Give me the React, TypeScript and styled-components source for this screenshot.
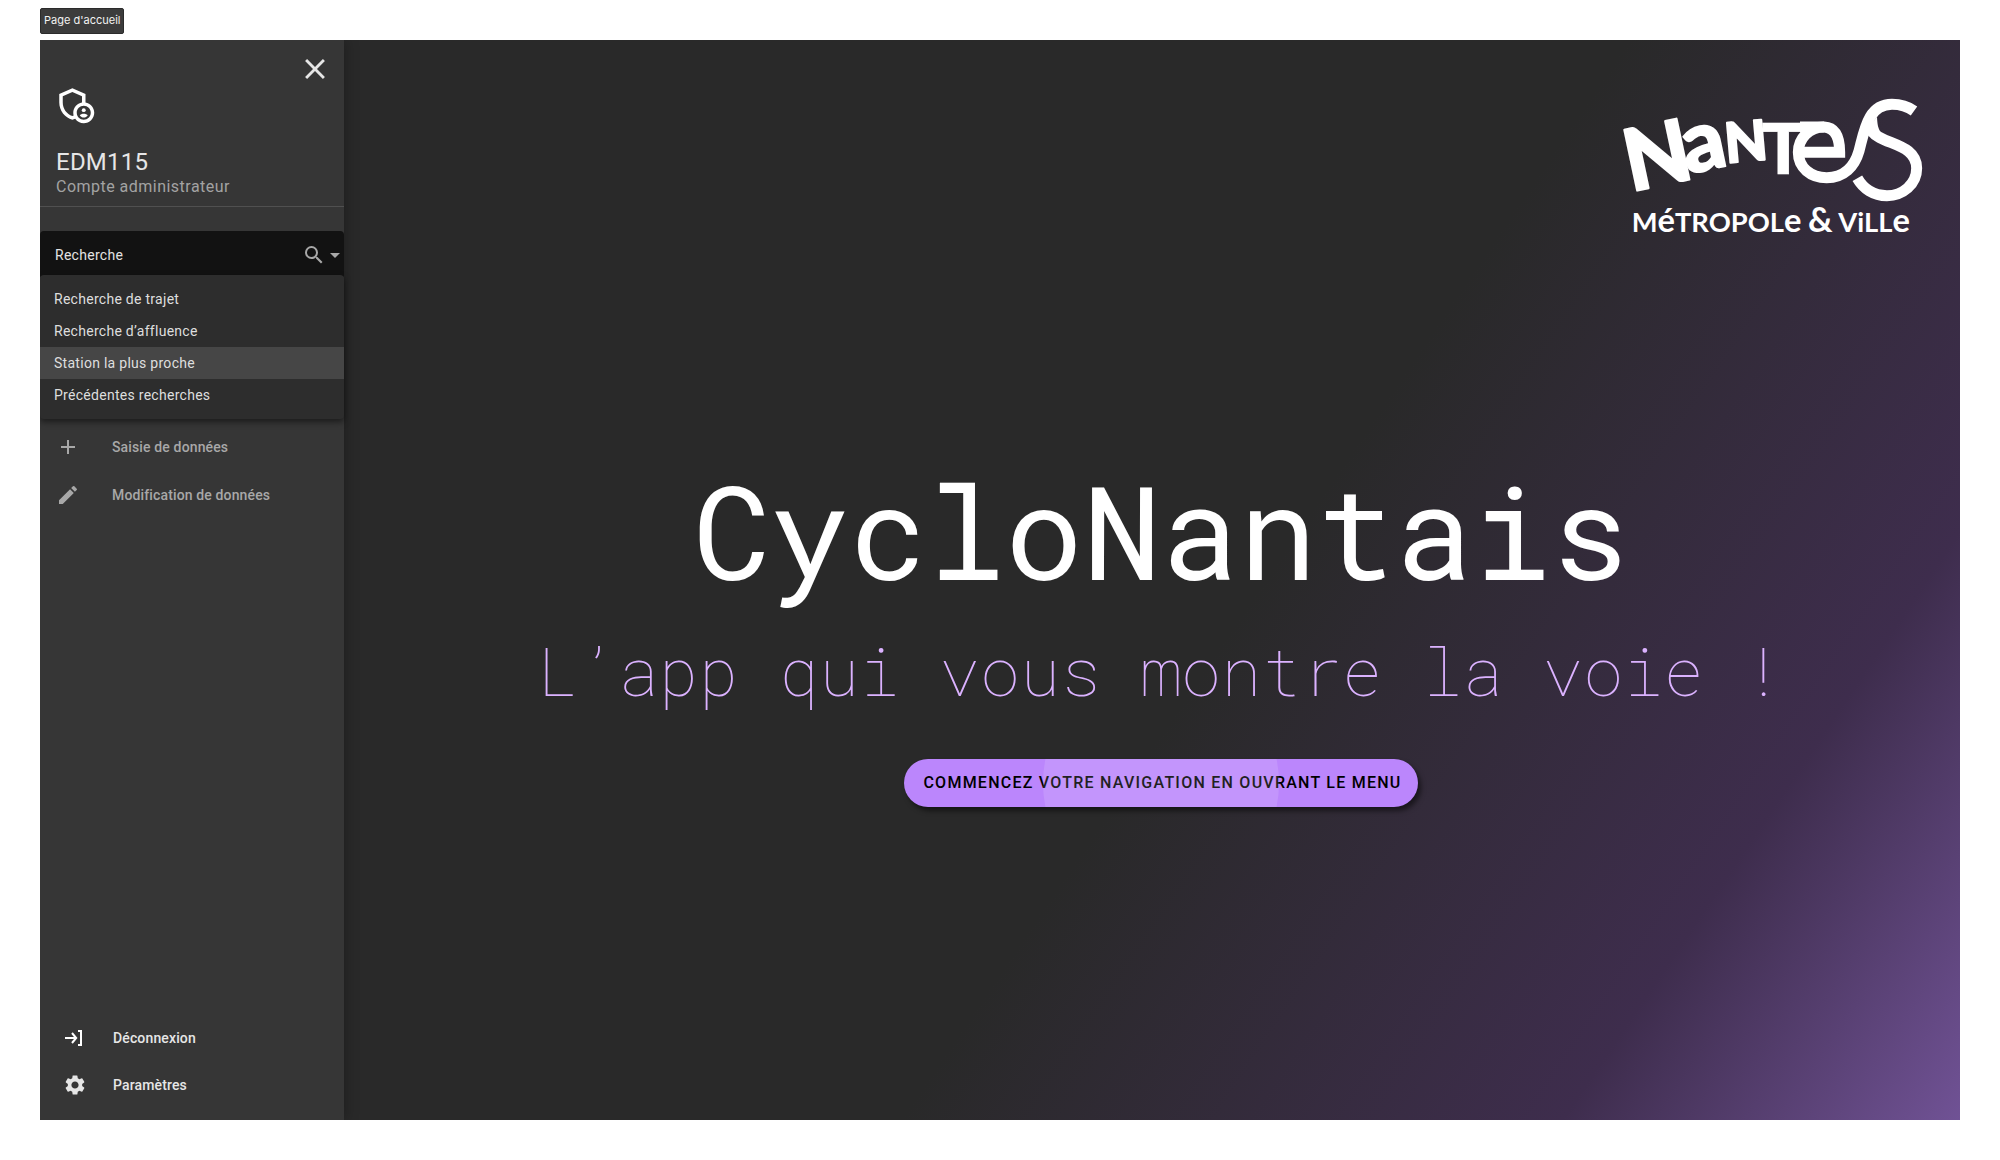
import React, { useState } from "react";
import styled, { createGlobalStyle } from "styled-components";
import {
  MdAdd,
  MdClose,
  MdEdit,
  MdOutlineAdminPanelSettings,
  MdSearch,
  MdSettings,
} from "react-icons/md";

const GlobalStyle = createGlobalStyle`
  *, *::before, *::after { box-sizing: border-box; }
  body {
    margin: 0;
    background: #ffffff;
    font-family: Roboto, "Liberation Sans", sans-serif;
  }
  button, input { font-family: inherit; }
`;

const Page = styled.div`
  display: flex;
  flex-direction: column;
  align-items: stretch;
  gap: 6px;
  min-height: 100vh;
  padding: 8px 40px 40px;
`;

const PageLabel = styled.div`
  align-self: flex-start;
  padding: 0 3px 1px;
  border: 1px solid #2b2b2b;
  border-radius: 2px;
  background: #3c3c3c;
  color: #f2f2f2;
  font: 400 11px/23px Inter, sans-serif;
`;

const Frame = styled.div`
  display: flex;
  flex: 1;
  overflow: hidden;
  background: linear-gradient(124deg, #292929 60%, #3e2d4d 85%, #705295 100%);
`;

const Sidebar = styled.aside`
  display: flex;
  flex-direction: column;
  flex: 0 0 304px;
  padding-bottom: 12px;
  background: #363636;
  box-shadow: 2px 0 12px rgba(0, 0, 0, 0.25);
`;

const Account = styled.header`
  padding: 12px 12px 9px 14px;
  border-bottom: 1px solid #505050;
`;

const AccountTop = styled.div`
  display: flex;
  align-items: flex-start;
  justify-content: space-between;
  margin-bottom: 23px;
  color: #ffffff;
`;

const Avatar = styled.span`
  display: flex;
  padding-top: 31px;
`;

const CloseButton = styled.button`
  display: flex;
  padding: 0;
  border: 0;
  background: none;
  color: #e6e6e6;
  cursor: pointer;
`;

const AccountName = styled.h2`
  margin: 0;
  padding-left: 2px;
  color: #e6e6e6;
  font-size: 24px;
  font-weight: 400;
  line-height: 28px;
  letter-spacing: 0.01em;
`;

const AccountRole = styled.p`
  margin: 1px 0 0;
  padding-left: 2px;
  color: #a3a3a3;
  font-size: 16px;
  line-height: 20px;
  letter-spacing: 0.03em;
`;

const SearchBar = styled.label`
  display: flex;
  align-items: center;
  height: 48px;
  margin: 24px 0 -4px;
  padding: 0 4px 0 15px;
  border-radius: 4px;
  background: #121212;
  color: #a8a8a8;
`;

const SearchInput = styled.input`
  flex: 1;
  min-width: 0;
  padding: 0;
  border: 0;
  outline: 0;
  background: none;
  color: #e3e3e3;
  font-size: 14px;
  line-height: 20px;
  letter-spacing: 0.02em;
`;

const CaretButton = styled.button`
  display: flex;
  padding: 4px 0 4px 4px;
  border: 0;
  background: none;
  color: inherit;
  cursor: pointer;
`;

const Menu = styled.ul`
  margin: 0 0 4px;
  padding: 8px 0;
  border-radius: 4px;
  background: #2d2d2d;
  box-shadow: 0 3px 6px rgba(0, 0, 0, 0.5);
  list-style: none;
`;

const MenuItem = styled.button<{ $active: boolean }>`
  display: block;
  width: 100%;
  padding: 0 14px;
  border: 0;
  background: ${(p) => (p.$active ? "#464646" : "transparent")};
  color: #dedede;
  font-size: 14px;
  line-height: 32px;
  letter-spacing: 0.02em;
  text-align: left;
  cursor: pointer;
`;

const Nav = styled.nav<{ $bright?: boolean }>`
  display: flex;
  flex-direction: column;
  margin-top: ${(p) => (p.$bright ? "auto" : "0")};
  color: ${(p) => (p.$bright ? "#e6e6e6" : "#a8a8a8")};
  padding-left: ${(p) => (p.$bright ? "23px" : "16px")};
  --icon-gap: ${(p) => (p.$bright ? "26px" : "32px")};
  --row-height: ${(p) => (p.$bright ? "47px" : "48px")};
`;

const NavLink = styled.a`
  display: flex;
  align-items: center;
  gap: var(--icon-gap);
  height: var(--row-height);
  color: inherit;
  font-size: 14px;
  font-weight: 500;
  letter-spacing: 0.01em;
  text-decoration: none;
`;

const Main = styled.main`
  display: flex;
  flex: 1;
  flex-direction: column;
  min-width: 0;
  padding: 58px 38px 58px 56px;
`;

const Logo = styled.svg`
  align-self: flex-end;
  width: 300px;
  height: 135px;
  fill: #ffffff;
  overflow: visible;
  font-family: Lato, sans-serif;
  font-weight: 900;
`;

const Hero = styled.section`
  display: flex;
  flex-direction: column;
  align-items: center;
  margin-top: 227px;
  text-align: center;
`;

const Title = styled.h1`
  margin: 0 0 30px;
  color: #ffffff;
  font: 400 130px/140px "Roboto Mono", "Liberation Mono", monospace;
`;

const Tagline = styled.p`
  margin: 0 0 49px;
  color: #dbb2ff;
  font: 100 67px/80px "Roboto Mono", "Liberation Mono", monospace;
  white-space: nowrap;
`;

const StartButton = styled.button`
  position: relative;
  overflow: hidden;
  height: 48px;
  padding: 0 16px 1px 19px;
  border: 0;
  border-radius: 24px;
  background: #bb86fc;
  color: #000000;
  font-size: 16px;
  font-weight: 500;
  letter-spacing: 0.078em;
  text-transform: uppercase;
  box-shadow: 3px 4px 5px rgba(0, 0, 0, 0.5);
  cursor: pointer;

  &::after {
    content: "";
    position: absolute;
    top: 50%;
    left: 50%;
    width: 236px;
    height: 236px;
    border-radius: 50%;
    background: rgba(255, 255, 255, 0.13);
    transform: translate(-50%, -50%);
  }
`;

const searches = [
  "Recherche de trajet",
  "Recherche d’affluence",
  "Station la plus proche",
  "Précédentes recherches",
];

function LogoutIcon() {
  return (
    <svg width="24" height="24" viewBox="0 0 24 24" fill="none" stroke="#ffffff" strokeWidth="2" aria-hidden="true">
      <path d="M2 12h10M9 7l4.200 5-4.200 5M15 5h3v14h-3" />
    </svg>
  );
}

function NantesLogo() {
  return (
    <Logo viewBox="66 53 900 405" role="img" aria-label="Nantes Métropole & Ville">
      <g stroke="#ffffff" strokeLinejoin="round">
        <text fontSize="256" strokeWidth="7" transform="translate(93 334) rotate(-12)">N</text>
        <text fontSize="254" strokeWidth="5" transform="translate(262 282) rotate(-12)">a</text>
        <text fontSize="166" strokeWidth="6" transform="translate(379 248) rotate(-5)">N</text>
      </g>
      <g fill="none" stroke="#ffffff" strokeWidth="33">
        <text fontSize="214" x="485" y="281" fill="#ffffff" strokeWidth="2">T</text>
        <path d="M600 140H672C707 142 719 172 719 216H606" />
        <path d="M672 140C628 140 595 174 595 216C595 262 632 292 680 292C732 292 764 258 777 212C793 152 803 72 876 72C906 72 924 79 942 92" />
        <path d="M814 152C846 194 950 188 950 264C950 312 908 346 861 346C820 346 789 324 772 294" />
      </g>
      <path d="M831 110C812 130 806 145 803 160L820 176L842 156C833 142 832 128 831 110Z" />
      <text x="95" y="455" fontSize="82" fontWeight="700">
        M<tspan fontSize="98">é</tspan>TROPOL<tspan fontSize="98">e</tspan> <tspan fontSize="102">&amp;</tspan> ViLL<tspan fontSize="98">e</tspan>
      </text>
    </Logo>
  );
}

export default function App() {
  const [query, setQuery] = useState("Recherche");
  const [active, setActive] = useState(2);

  return (
    <>
      <GlobalStyle />
      <Page>
        <PageLabel>Page d'accueil</PageLabel>
        <Frame>
          <Sidebar>
            <Account>
              <AccountTop>
                <Avatar>
                  <MdOutlineAdminPanelSettings size={42} />
                </Avatar>
                <CloseButton aria-label="Fermer le menu">
                  <MdClose size={34} />
                </CloseButton>
              </AccountTop>
              <AccountName>EDM115</AccountName>
              <AccountRole>Compte administrateur</AccountRole>
            </Account>

            <SearchBar>
              <SearchInput
                type="text"
                aria-label="Recherche"
                value={query}
                onChange={(e) => setQuery(e.target.value)}
              />
              <MdSearch size={24} />
              <CaretButton aria-label="Choisir un type de recherche" aria-expanded="true">
                <svg width="10" height="5" viewBox="0 0 10 5" fill="currentColor" aria-hidden="true">
                  <path d="M0 0h10L5 5z" />
                </svg>
              </CaretButton>
            </SearchBar>
            <Menu>
              {searches.map((label, i) => (
                <li key={label}>
                  <MenuItem $active={i === active} onClick={() => setActive(i)}>
                    {label}
                  </MenuItem>
                </li>
              ))}
            </Menu>

            <Nav aria-label="Données">
              <NavLink href="#saisie">
                <MdAdd size={24} />
                Saisie de données
              </NavLink>
              <NavLink href="#modification">
                <MdEdit size={24} />
                Modification de données
              </NavLink>
            </Nav>

            <Nav $bright aria-label="Compte">
              <NavLink href="#deconnexion">
                <LogoutIcon />
                Déconnexion
              </NavLink>
              <NavLink href="#parametres">
                <MdSettings size={24} />
                Paramètres
              </NavLink>
            </Nav>
          </Sidebar>

          <Main>
            <NantesLogo />
            <Hero>
              <Title>CycloNantais</Title>
              <Tagline>L’app qui vous montre la voie !</Tagline>
              <StartButton>Commencez votre navigation en ouvrant le menu</StartButton>
            </Hero>
          </Main>
        </Frame>
      </Page>
    </>
  );
}
